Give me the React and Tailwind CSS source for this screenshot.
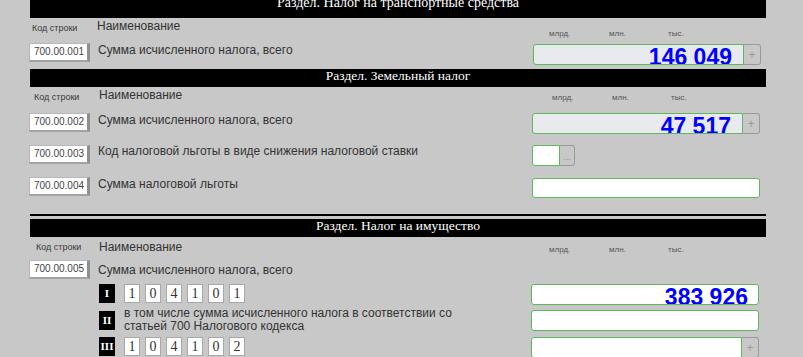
import React from 'react';

const SectionBar = ({ title, first }) => (
  <div className="h-[18px] bg-black overflow-hidden ml-[1px]">
    <div
      className={
        first
          ? "-mt-[6px] text-center text-white font-['Liberation_Serif',serif] text-[14px] leading-[18px]"
          : "text-center text-white font-['Liberation_Serif',serif] text-[13.5px] leading-[14px]"
      }
    >
      {title}
    </div>
  </div>
);

const ColHeads = ({ h, kod, name, units, unitsPl }) => (
  <div className={`flex ${h}`}>
    <div className={`w-[68px] shrink-0 text-[9px] leading-[12px] text-[#3a3a3a] ${kod}`}>Код строки</div>
    <div className={`text-[12px] leading-[14px] text-[#333] ${name}`}>Наименование</div>
    <div className={`ml-auto mr-[5px] w-[228px] flex text-[8px] leading-[8px] text-[#555] ${units} ${unitsPl}`}>
      <span className="w-[60px]">млрд.</span>
      <span className="w-[59px]">млн.</span>
      <span>тыс.</span>
    </div>
  </div>
);

const CodeBox = ({ code }) => (
  <div className="w-[61px] h-[19px] shrink-0 bg-white border border-[#b8b8b8] border-r-[3px] border-r-[#8f8f8f] border-b-2 border-b-[#a3a3a3] pl-[4px] text-[10px] leading-[16px] text-[#444]">
    {code}
  </div>
);

const PlusInput = ({ value, bg }) => (
  <div className="w-[228px] h-[21px] flex">
    <div className={`flex-1 border border-[#5cb85c] rounded-l-[3px] overflow-hidden text-right pr-[11px] ${bg}`}>
      {value && (
        <div className="pt-[3px] text-[23px] leading-[19px] font-bold text-[#0000ff]">{value}</div>
      )}
    </div>
    <div className="w-[17px] border border-l-0 border-[#9a9a9a] rounded-r-[3px] flex items-center justify-center text-[#9a9a9a] text-[12px] leading-none">
      +
    </div>
  </div>
);

const Roman = ({ n }) => (
  <div className="w-[16px] h-[19px] shrink-0 bg-black flex items-center justify-center text-white font-['Liberation_Serif',serif] font-bold text-[11px] leading-none">
    {n}
  </div>
);

const Digits = ({ list }) => (
  <div className="flex gap-[5px]">
    {list.map((d, i) => (
      <div
        key={i}
        className="w-[16px] h-[19px] bg-white border border-[#a8a8a8] flex items-center justify-center font-['Liberation_Serif',serif] text-[14px] leading-none text-[#333]"
      >
        {d}
      </div>
    ))}
  </div>
);

export default function App() {
  return (
    <div className="w-[803px] h-[357px] overflow-hidden bg-[#c8c8c8] font-['Liberation_Sans',Arial,sans-serif] text-[#333]">
      <div className="ml-[29px] w-[737px]">
        {/* Транспортный налог */}
        <SectionBar first title="Раздел. Налог на транспортные средства" />
        <ColHeads h="h-[25px]" kod="pl-[3px] pt-[4px]" name="pt-[1px]" units="pt-[12px]" unitsPl="pl-[16px]" />
        <div className="flex h-[26px]">
          <CodeBox code="700.00.001" />
          <div className="ml-[8px] text-[12px] leading-[14px]">Сумма исчисленного налога, всего</div>
          <div className="ml-auto mr-[5px] mt-[1px]">
            <PlusInput value="146 049" bg="bg-[#e8eaed]" />
          </div>
        </div>

        {/* Земельный налог */}
        <SectionBar title="Раздел. Земельный налог" />
        <ColHeads h="h-[26px]" kod="pl-[5px] pt-[4px]" name="pl-[2px] pt-[1px]" units="pt-[7px]" unitsPl="pl-[19px]" />
        <div className="flex h-[32px]">
          <CodeBox code="700.00.002" />
          <div className="ml-[8px] text-[12px] leading-[14px]">Сумма исчисленного налога, всего</div>
          <div className="ml-auto mr-[6px]">
            <PlusInput value="47 517" bg="bg-[#e8eaed]" />
          </div>
        </div>
        <div className="flex h-[32px]">
          <CodeBox code="700.00.003" />
          <div className="ml-[8px] text-[12px] leading-[14px] -mt-[1px]">
            Код налоговой льготы в виде снижения налоговой ставки
          </div>
          <div className="ml-auto mr-[6px] w-[228px]">
            <div className="flex h-[21px]">
              <div className="w-[28px] bg-white border border-[#5cb85c] rounded-l-[3px]" />
              <div className="w-[15px] border border-l-0 border-[#9a9a9a] rounded-r-[3px] flex items-end justify-center pb-[3px] text-[#888] text-[9px] leading-none">
                ...
              </div>
            </div>
          </div>
        </div>
        <div className="flex h-[32px]">
          <CodeBox code="700.00.004" />
          <div className="ml-[8px] text-[12px] leading-[14px]">Сумма налоговой льготы</div>
          <div className="ml-auto mr-[6px] mt-[1px] w-[228px] h-[20px] bg-white border border-[#5cb85c] rounded-[3px]" />
        </div>

        {/* Налог на имущество */}
        <div className="mt-[5px] ml-[1px] h-[2px] bg-black" />
        <div className="mt-[3px]">
          <SectionBar title="Раздел. Налог на имущество" />
        </div>
        <ColHeads h="h-[23px]" kod="pl-[7px] pt-[4px]" name="pl-[2px] pt-[3px]" units="pt-[9px]" unitsPl="pl-[16px]" />
        <div className="flex h-[24px]">
          <CodeBox code="700.00.005" />
          <div className="ml-[8px] pt-[3px] text-[12px] leading-[14px]">Сумма исчисленного налога, всего</div>
        </div>
        <div className="flex h-[26px]">
          <div className="ml-[70px] flex gap-[9px]">
            <Roman n="I" />
            <Digits list={['1', '0', '4', '1', '0', '1']} />
          </div>
          <div className="ml-auto mr-[7px] w-[228px] h-[21px] bg-white border border-[#5cb85c] rounded-[3px] overflow-hidden text-right pr-[10px]">
            <div className="pt-[3px] text-[23px] leading-[19px] font-bold text-[#0000ff]">383 926</div>
          </div>
        </div>
        <div className="flex h-[27px]">
          <div className="ml-[70px] flex gap-[9px]">
            <div className="mt-[1px]">
              <Roman n="II" />
            </div>
            <div className="-mt-[3px] text-[12px] leading-[13px]">
              в том числе сумма исчисленного налога в соответствии со
              <br />
              статьей 700 Налогового кодекса
            </div>
          </div>
          <div className="ml-auto mr-[7px] w-[228px] h-[21px] bg-white border border-[#5cb85c] rounded-[3px]" />
        </div>
        <div className="flex h-[26px]">
          <div className="ml-[70px] flex gap-[9px]">
            <Roman n="III" />
            <Digits list={['1', '0', '4', '1', '0', '2']} />
          </div>
          <div className="ml-auto mr-[7px]">
            <PlusInput bg="bg-white" />
          </div>
        </div>
      </div>
    </div>
  );
}
